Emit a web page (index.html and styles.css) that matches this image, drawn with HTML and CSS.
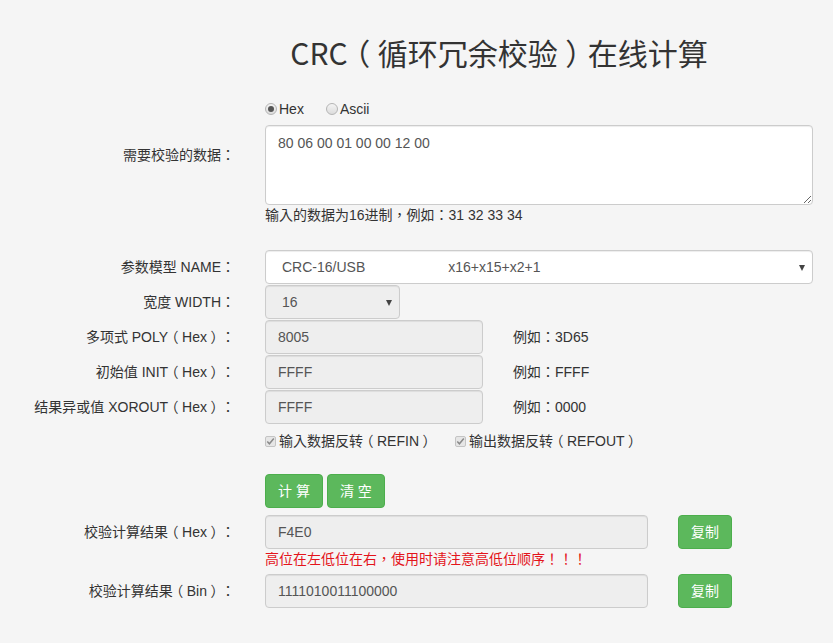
FILE: index.html
```html
<!DOCTYPE html>
<html lang="zh-CN">
<head>
<meta charset="utf-8">
<title>CRC（循环冗余校验）在线计算</title>
<link rel="stylesheet" href="styles.css">
</head>
<body>
<div class="page">
  <h1 class="title">CRC<span class="pn">（</span>循环冗余校验<span class="pn">）</span>在线计算</h1>
  <div class="form">
    <div class="row row-radio">
      <div class="label"></div>
      <div class="field radios">
        <label class="radio"><span class="radio-dot checked"></span>Hex</label>
        <label class="radio"><span class="radio-dot"></span>Ascii</label>
      </div>
    </div>
    <div class="row row-data">
      <div class="label label-top">需要校验的数据：</div>
      <div class="field">
        <textarea class="textarea">80 06 00 01 00 00 12 00</textarea>
        <div class="help">输入的数据为16进制，例如：31 32 33 34</div>
      </div>
    </div>
    <div class="row row-name">
      <div class="label">参数模型 NAME：</div>
      <div class="field">
        <div class="select select-name">
          <span class="opt-name">CRC-16/USB</span><span class="opt-poly">x16+x15+x2+1</span>
          <span class="arrow"></span>
        </div>
      </div>
    </div>
    <div class="row">
      <div class="label">宽度 WIDTH：</div>
      <div class="field">
        <div class="select select-width disabled">
          <span class="opt-name">16</span>
          <span class="arrow"></span>
        </div>
      </div>
    </div>
    <div class="row">
      <div class="label">多项式 POLY<span class="pn">（</span>Hex<span class="pn">）</span>：</div>
      <div class="field inline">
        <input class="input input-short" type="text" value="8005" readonly>
        <span class="example">例如：3D65</span>
      </div>
    </div>
    <div class="row">
      <div class="label">初始值 INIT<span class="pn">（</span>Hex<span class="pn">）</span>：</div>
      <div class="field inline">
        <input class="input input-short" type="text" value="FFFF" readonly>
        <span class="example">例如：FFFF</span>
      </div>
    </div>
    <div class="row">
      <div class="label">结果异或值 XOROUT<span class="pn">（</span>Hex<span class="pn">）</span>：</div>
      <div class="field inline">
        <input class="input input-short" type="text" value="FFFF" readonly>
        <span class="example">例如：0000</span>
      </div>
    </div>
    <div class="row row-check">
      <div class="label"></div>
      <div class="field checks">
        <label class="check"><svg class="cbox" width="11" height="11" viewBox="0 0 11 11"><rect x="0.5" y="0.5" width="10" height="10" rx="1.5" fill="#e6e6e6" stroke="#c4c4c4"/><path d="M2.3 5.6 L4.4 7.8 L8.8 2.6" fill="none" stroke="#8a8a8a" stroke-width="1.5"/></svg>输入数据反转<span class="pn">（</span>REFIN<span class="pn">）</span></label>
        <label class="check"><svg class="cbox" width="11" height="11" viewBox="0 0 11 11"><rect x="0.5" y="0.5" width="10" height="10" rx="1.5" fill="#e6e6e6" stroke="#c4c4c4"/><path d="M2.3 5.6 L4.4 7.8 L8.8 2.6" fill="none" stroke="#8a8a8a" stroke-width="1.5"/></svg>输出数据反转<span class="pn">（</span>REFOUT<span class="pn">）</span></label>
      </div>
    </div>
    <div class="row row-buttons">
      <div class="label"></div>
      <div class="field buttons">
        <button class="btn" type="button">计 算</button>
        <button class="btn" type="button">清 空</button>
      </div>
    </div>
    <div class="row row-result">
      <div class="label">校验计算结果<span class="pn">（</span>Hex<span class="pn">）</span>：</div>
      <div class="field inline">
        <input class="input input-long" type="text" value="F4E0" readonly>
        <button class="btn btn-copy" type="button">复制</button>
      </div>
    </div>
    <div class="row row-warn">
      <div class="label"></div>
      <div class="field warn">高位在左低位在右，使用时请注意高低位顺序！！！</div>
    </div>
    <div class="row row-bin">
      <div class="label">校验计算结果<span class="pn">（</span>Bin<span class="pn">）</span>：</div>
      <div class="field inline">
        <input class="input input-long" type="text" value="1111010011100000" readonly>
        <button class="btn btn-copy" type="button">复制</button>
      </div>
    </div>
  </div>
</div>
</body>
</html>
```
FILE: styles.css
```css
* { box-sizing: border-box; }
html, body {
  margin: 0;
  padding: 0;
  background: #f5f5f5;
}
body {
  font-family: "Liberation Sans", "Noto Sans CJK TC", sans-serif;
  font-feature-settings: "locl" 0;
  font-size: 14px;
  line-height: 20px;
  color: #333;
}
.page {
  width: 833px;
  height: 643px;
  overflow: hidden;
}
.title {
  margin: 32px 0 0 0;
  padding-left: 165px;
  text-align: center;
  font-family: "Noto Sans CJK TC", sans-serif;
  font-weight: 400;
  font-size: 30px;
  line-height: 40px;
  color: #333;
}
/* full-width parentheses drawn centred in their em box */
.pn {
  font-feature-settings: "locl" 0, "halt" 1;
  padding: 0 0.25em;
}

.form {
  padding-right: 20px;
  padding-top: 27px;
}
.row {
  display: flex;
  align-items: center;
  gap: 30px;
  margin-top: 1px;
}
.label {
  flex: 0 0 235px;
  text-align: right;
  color: #333;
}
.label-top { align-self: flex-start; padding-top: 20px; }
.field { flex: 1 1 auto; min-width: 0; }
.inline { display: flex; align-items: center; gap: 30px; }

.row-radio { margin-top: 0; }
.radios { display: flex; gap: 22px; height: 20px; align-items: center; }
.radio { display: flex; align-items: center; color: #333; }
.radio-dot {
  width: 12px; height: 12px;
  border-radius: 50%;
  border: 1px solid #b5b5b5;
  background: linear-gradient(#f4f4f4, #dcdcdc);
  margin-right: 2px;
  display: inline-flex; align-items: center; justify-content: center;
}
.radio-dot.checked::after {
  content: "";
  width: 6px; height: 6px; border-radius: 50%;
  background: #555;
}

.row-data { margin-top: 6px; }
.textarea {
  display: block;
  width: 100%;
  height: 80px;
  margin: 0;
  padding: 7px 12px;
  border: 1px solid #ccc;
  border-radius: 4px;
  background: #fff;
  box-shadow: inset 0 1px 1px rgba(0,0,0,.075);
  font-family: "Liberation Sans", "Noto Sans CJK TC", sans-serif;
  font-size: 14px;
  line-height: 20px;
  color: #555;
  resize: vertical;
}
.help { line-height: 20px; color: #333; }

.row-name { margin-top: 25px; }
.select {
  position: relative;
  display: flex;
  align-items: center;
  height: 34px;
  padding: 0 16px;
  border: 1px solid #ccc;
  border-radius: 4px;
  background: #fff;
  color: #555;
  box-shadow: inset 0 1px 1px rgba(0,0,0,.075);
}
.select.disabled { background: #eee; }
.select-width { width: 135px; }
.opt-poly { margin-left: 83px; }
.arrow {
  position: absolute;
  right: 7px;
  top: 14px;
  width: 0; height: 0;
  border-left: 3.5px solid transparent;
  border-right: 3.5px solid transparent;
  border-top: 6px solid #444;
}

.input {
  display: block;
  height: 34px;
  margin: 0;
  padding: 6px 12px;
  border: 1px solid #ccc;
  border-radius: 4px;
  background: #eee;
  box-shadow: inset 0 1px 1px rgba(0,0,0,.075);
  font-family: "Liberation Sans", "Noto Sans CJK TC", sans-serif;
  font-size: 14px;
  color: #555;
  outline: none;
}
.input-short { width: 218px; }
.input-long { width: 383px; }
.example { color: #333; }

.row-check { margin-top: 7px; }
.checks { display: flex; gap: 22px; height: 20px; align-items: center; }
.check { display: flex; align-items: center; color: #333; }
.cbox { margin-right: 3px; }

.row-buttons { margin-top: 23px; }
.buttons { display: flex; gap: 4px; }
.btn {
  height: 34px;
  padding: 6px 12px;
  border: 1px solid #4cae4c;
  border-radius: 4px;
  background: #5cb85c;
  color: #fff;
  font-family: "Liberation Sans", "Noto Sans CJK TC", sans-serif;
  font-feature-settings: "locl" 0;
  font-size: 14px;
  line-height: 20px;
  cursor: pointer;
}
.btn-copy { width: 54px; padding: 6px 0; }

.row-result { margin-top: 7px; }
.row-warn { margin-top: 0; }
.warn { color: #e4141b; line-height: 20px; }
.row-bin { margin-top: 5px; }
```
